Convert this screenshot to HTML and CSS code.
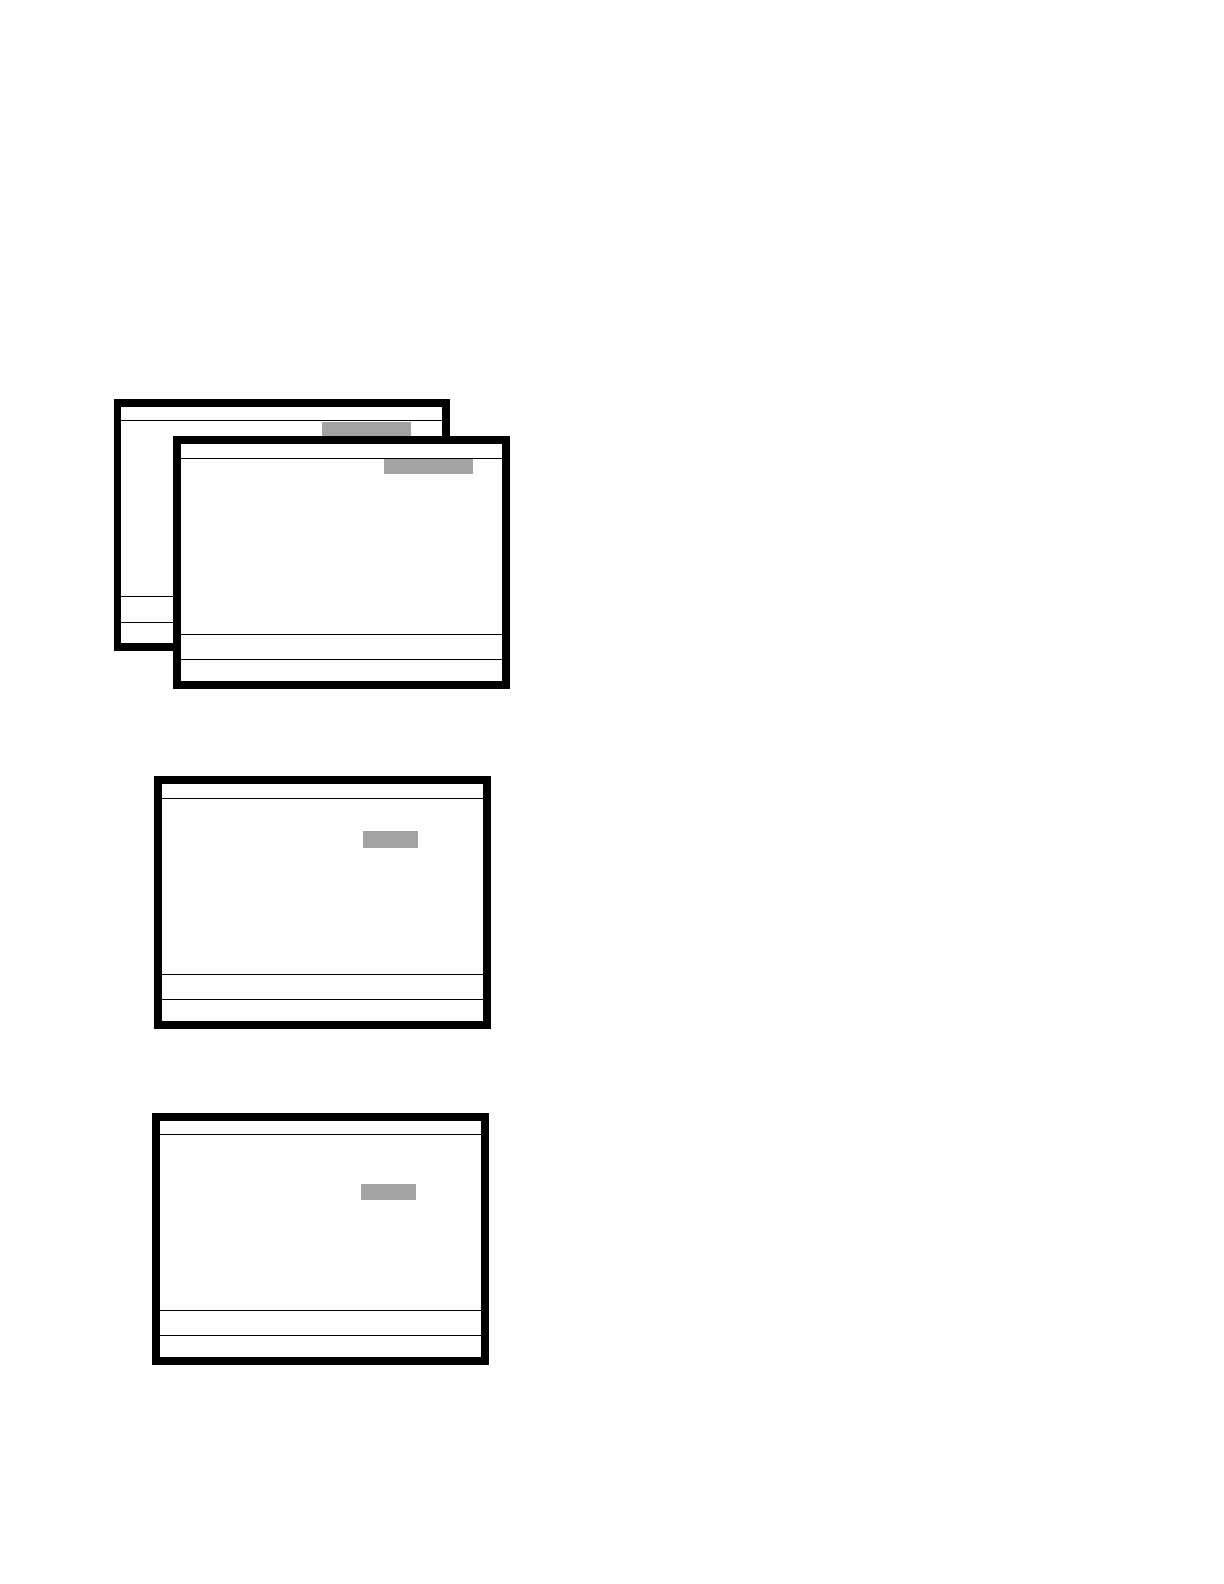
FILE: index.html
```html
<!DOCTYPE html>
<html lang="en">
<head>
<meta charset="utf-8">
<meta name="viewport" content="width=device-width, initial-scale=1">
<title>Screens</title>
<link rel="stylesheet" href="styles.css">
</head>
<body>
<main class="page">
  <div class="stack">
    <section class="screen screen-back">
      <header class="bar bar-slim"></header>
      <div class="content"><div class="field field-wide field-back"></div></div>
      <div class="message"></div>
      <footer class="keys"></footer>
    </section>
    <section class="screen screen-front">
      <header class="bar"></header>
      <div class="content"><div class="field field-wide field-front"></div></div>
      <div class="message"></div>
      <footer class="keys"></footer>
    </section>
  </div>
  <section class="screen screen-second">
    <header class="bar"></header>
    <div class="content"><div class="field field-second"></div></div>
    <div class="message"></div>
    <footer class="keys"></footer>
  </section>
  <section class="screen screen-third">
    <header class="bar bar-slim"></header>
    <div class="content"><div class="field field-third"></div></div>
    <div class="message"></div>
    <footer class="keys"></footer>
  </section>
</main>
</body>
</html>
```
FILE: styles.css
```css
* {
  box-sizing: border-box;
}

body {
  margin: 0;
  background: #fff;
  font-family: "Liberation Sans", Arial, sans-serif;
}

.page {
  display: flex;
  flex-direction: column;
  min-height: 100vh;
  padding: 399px 24px 120px 114px;
}

/* Two overlapping screens share one grid cell */
.stack {
  display: grid;
  align-items: start;
}

.screen {
  display: flex;
  flex-direction: column;
  width: 100%;
  max-width: 337px;
  border: 8px solid #000;
  background: #fff;
}

.screen-back {
  grid-area: 1 / 1;
  max-width: 336px;
  border-left-width: 7px;
}

.screen-front {
  grid-area: 1 / 1;
  margin: 37px 0 0 59px;
}

.screen-second {
  margin: 87px 0 0 40px;
}

.screen-third {
  margin: 84px 0 0 38px;
}

.bar {
  height: 15px;
  border-bottom: 1px solid #000;
}

.bar-slim {
  height: 14px;
}

.content {
  display: flex;
  align-items: flex-start;
  height: 175px;
}

.message {
  height: 25px;
  border-top: 1px solid #000;
}

.screen-back .message {
  height: 26px;
}

.keys {
  height: 22px;
  border-top: 1px solid #000;
}

.screen-back .keys {
  height: 21px;
}

.field {
  width: 55px;
  height: 16px;
  margin-left: 201px;
  background: #a2a3a4;
}

.field-wide {
  width: 89px;
}

.field-back {
  margin-top: 1px;
}

.field-front {
  height: 15px;
  margin-left: 203px;
}

.field-second {
  height: 17px;
  margin-top: 32px;
}

.field-third {
  margin-top: 49px;
}
```
